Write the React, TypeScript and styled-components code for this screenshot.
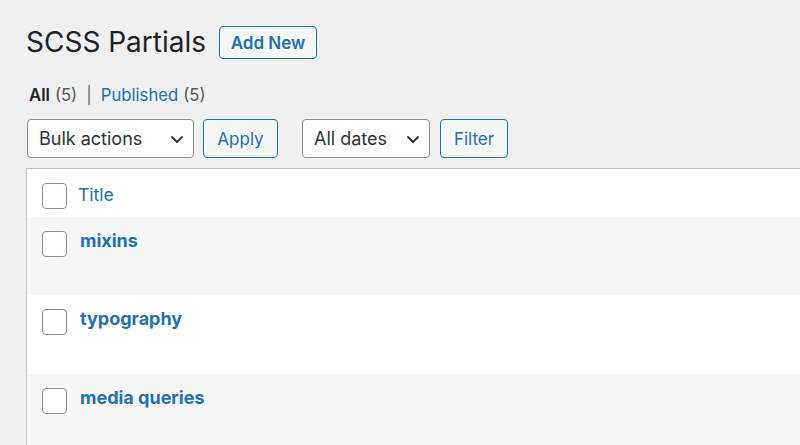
import React from "react";
import styled, { createGlobalStyle } from "styled-components";

const Global = createGlobalStyle`
  html, body { margin: 0; padding: 0; background: #f0f0f1; overflow: hidden; }
  body { font-family: Inter, "Noto Sans", "Liberation Sans", sans-serif; color: #1d2327; }
  * { box-sizing: border-box; }
`;

const Wrap = styled.div`
  padding: 26px 0 0 26px;
  width: 800px;
  height: 445px;
  overflow: hidden;
`;

const Header = styled.div`
  display: flex;
  align-items: center;
  gap: 13px;
  height: 33px;
`;

const PageTitle = styled.h1`
  margin: 0;
  font-size: 28px;
  font-weight: 400;
  line-height: 33px;
  color: #1d2327;
`;

const OutlineButton = styled.button<{ $w: number; $h: number }>`
  width: ${(p) => p.$w}px;
  height: ${(p) => p.$h}px;
  border: 1px solid #2271b1;
  border-radius: 4px;
  background: #f6f7f7;
  color: #2271b1;
  font-family: inherit;
  font-size: 17px;
  font-weight: ${(p) => (p.$h < 35 ? 600 : 400)};
  padding: 0;
  display: flex;
  align-items: center;
  justify-content: center;
  flex: none;
`;

const Views = styled.div`
  margin-top: 26px;
  margin-left: 3px;
  font-size: 16.7px;
  line-height: 20px;
  display: flex;
  align-items: center;
  gap: 5px;
  color: #50575e;
`;

const ViewCurrent = styled.span`
  font-weight: 600;
  color: #1d2327;
`;

const ViewLink = styled.span`
  color: #2271b1;
`;

const Sep = styled.span`
  color: #646970;
  margin: 0 4px;
`;

const TableNav = styled.div`
  margin-top: 14px;
  margin-left: 1px;
  display: flex;
  align-items: center;
  height: 39px;
`;

const Select = styled.div<{ $w: number }>`
  width: ${(p) => p.$w}px;
  height: 39px;
  border: 1px solid #8c8f94;
  border-radius: 4px;
  background: #fff;
  display: flex;
  align-items: center;
  justify-content: space-between;
  padding: 0 8px 0 11px;
  font-size: 18px;
  color: #2c3338;
  flex: none;
`;

const Gap = styled.div<{ $w: number }>`
  width: ${(p) => p.$w}px;
  flex: none;
`;

const Table = styled.div`
  margin-top: 10px;
  width: 900px;
  border-top: 1px solid #c3c4c7;
  border-left: 1px solid #c3c4c7;
  background: #fff;
`;

const HeadRow = styled.div`
  height: 48px;
  display: flex;
  align-items: flex-start;
  padding: 14px 0 0 15px;
  background: #fff;
`;

const Row = styled.div<{ $alt: boolean; $h: number }>`
  height: ${(p) => p.$h}px;
  display: flex;
  align-items: flex-start;
  padding: 14px 0 0 15px;
  background: ${(p) => (p.$alt ? "#f6f7f7" : "#fff")};
`;

const Check = styled.span`
  width: 25px;
  height: 26px;
  border: 1px solid #8c8f94;
  border-radius: 4px;
  background: #fff;
  flex: none;
`;

const HeadTitle = styled.span`
  margin-left: 11px;
  font-size: 17.5px;
  line-height: 24px;
  color: #2271b1;
`;

const RowTitle = styled.span`
  margin-left: 13px;
  margin-top: -2px;
  font-size: 18px;
  line-height: 24px;
  font-weight: 700;
  color: #2271b1;
`;

const Chevron = () => (
  <svg width="16" height="16" viewBox="0 0 16 16" fill="none">
    <path d="M3 6l5 5 5-5" stroke="#2c3338" strokeWidth="1.8" strokeLinecap="round" strokeLinejoin="round" />
  </svg>
);

const rows = [
  { title: "mixins", h: 78 },
  { title: "typography", h: 79 },
  { title: "media queries", h: 79 },
];

export default function App() {
  return (
    <>
      <Global />
      <Wrap>
        <Header>
          <PageTitle>SCSS Partials</PageTitle>
          <OutlineButton $w={98} $h={33}>Add New</OutlineButton>
        </Header>
        <Views>
          <ViewCurrent>All</ViewCurrent>
          <span>(5)</span>
          <Sep>|</Sep>
          <ViewLink>Published</ViewLink>
          <span>(5)</span>
        </Views>
        <TableNav>
          <Select $w={167}>
            <span>Bulk actions</span>
            <Chevron />
          </Select>
          <Gap $w={9} />
          <OutlineButton $w={75} $h={39}>Apply</OutlineButton>
          <Gap $w={24} />
          <Select $w={128}>
            <span>All dates</span>
            <Chevron />
          </Select>
          <Gap $w={10} />
          <OutlineButton $w={68} $h={39}>Filter</OutlineButton>
        </TableNav>
        <Table>
          <HeadRow>
            <Check />
            <HeadTitle>Title</HeadTitle>
          </HeadRow>
          {rows.map((r, i) => (
            <Row key={r.title} $alt={i % 2 === 0} $h={r.h}>
              <Check />
              <RowTitle>{r.title}</RowTitle>
            </Row>
          ))}
        </Table>
      </Wrap>
    </>
  );
}
